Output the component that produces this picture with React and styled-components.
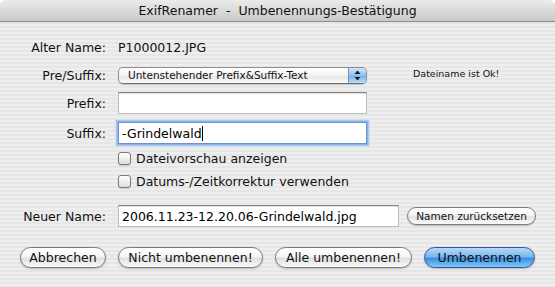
import React from 'react';
import styled, { createGlobalStyle, css } from 'styled-components';

const GlobalStyle = createGlobalStyle`
    html, body {
        margin: 0;
        padding: 0;
        background: #ffffff;
    }
    body {
        font-family: "DejaVu Sans", "Liberation Sans", sans-serif;
        font-size: 12.5px;
        color: #000;
    }
`;

const App = () => {
    return (
        <>
            <GlobalStyle />
            <Window>
                <TitleBar>ExifRenamer  -  Umbenennungs-Bestätigung</TitleBar>
                <Content>
                    <Row $top={17} $height={16}>
                        <Label>Alter Name:</Label>
                        <Value>P1000012.JPG</Value>
                    </Row>
                    <Row $top={11} $height={18}>
                        <Label>Pre/Suffix:</Label>
                        <Popup>
                            <PopupText>Untenstehender Prefix&amp;Suffix-Text</PopupText>
                            <PopupArrows>
                                <svg width="7" height="11" viewBox="0 0 7 11">
                                    <path d="M3.5 0.5 L6.5 4 L0.5 4 Z" fill="#1a1a1a" />
                                    <path d="M3.5 10.5 L6.5 7 L0.5 7 Z" fill="#1a1a1a" />
                                </svg>
                            </PopupArrows>
                        </Popup>
                        <Status>Dateiname ist Ok!</Status>
                    </Row>
                    <Row $top={8} $height={22}>
                        <Label>Prefix:</Label>
                        <TextField $width={249} />
                    </Row>
                    <Row $top={8} $height={22}>
                        <Label>Suffix:</Label>
                        <TextField $width={249} $focused>
                            -Grindelwald<Caret />
                        </TextField>
                    </Row>
                    <CheckRow $top={7}>
                        <CheckBox />
                        <span>Dateivorschau anzeigen</span>
                    </CheckRow>
                    <CheckRow $top={9}>
                        <CheckBox />
                        <span>Datums-/Zeitkorrektur verwenden</span>
                    </CheckRow>
                    <Row $top={17} $height={22}>
                        <Label>Neuer Name:</Label>
                        <TextField $width={281}>2006.11.23-12.20.06-Grindelwald.jpg</TextField>
                        <SmallButton>Namen zurücksetzen</SmallButton>
                    </Row>
                    <ButtonBar>
                        <PillButton $width={86}>Abbrechen</PillButton>
                        <PillButton $width={145}>Nicht umbenennen!</PillButton>
                        <PillButton $width={137}>Alle umbenennen!</PillButton>
                        <PillButton $width={111} $primary>Umbenennen</PillButton>
                    </ButtonBar>
                </Content>
            </Window>
        </>
    );
};

export default App;

const Window = styled.div`
    width: 555px;
    height: 287px;
    display: flex;
    flex-direction: column;
    overflow: hidden;
    border-radius: 6px 6px 0 0;
    background: repeating-linear-gradient(
        to bottom,
        #eeeeee 0px,
        #eeeeee 2px,
        #e6e6e6 2px,
        #e6e6e6 4px
    );
`;

const TitleBar = styled.div`
    height: 21px;
    flex-shrink: 0;
    display: flex;
    align-items: center;
    justify-content: center;
    white-space: pre;
    font-size: 12.5px;
    color: #111;
    background: linear-gradient(to bottom, #ebebeb 0%, #d9d9d9 55%, #c9c9c9 100%);
    border-bottom: 1px solid #8c8c8c;
`;

const Content = styled.div`
    display: flex;
    flex-direction: column;
`;

const Row = styled.div`
    display: flex;
    align-items: center;
    margin-top: ${props => props.$top}px;
    height: ${props => props.$height}px;
`;

const Label = styled.div`
    width: 106px;
    margin-right: 12px;
    text-align: right;
    flex-shrink: 0;
    color: #111;
`;

const Value = styled.div`
    color: #111;
`;

const Popup = styled.div`
    width: 249px;
    height: 17px;
    box-sizing: border-box;
    display: flex;
    align-items: center;
    border: 1px solid #8d8d8d;
    border-bottom-color: #6e6e6e;
    border-radius: 5px;
    overflow: hidden;
    background: linear-gradient(to bottom, #ffffff 0%, #f3f3f3 50%, #e4e4e4 51%, #fbfbfb 100%);
    box-shadow: 0 1px 1px rgba(0, 0, 0, 0.18);
`;

const PopupText = styled.div`
    flex: 1;
    padding-left: 9px;
    font-size: 10.5px;
    color: #111;
`;

const PopupArrows = styled.div`
    width: 17px;
    height: 100%;
    display: flex;
    align-items: center;
    justify-content: center;
    border-left: 1px solid #6f8fb8;
    background: linear-gradient(to bottom, #cfe6fb 0%, #8cc2f0 50%, #6aaeea 51%, #bfe2fc 100%);
`;

const Status = styled.div`
    margin-left: 46px;
    margin-top: -4px;
    font-size: 9.5px;
    color: #111;
`;

const TextField = styled.div`
    width: ${props => props.$width}px;
    height: 22px;
    box-sizing: border-box;
    display: flex;
    align-items: center;
    padding-left: 3px;
    background: #fff;
    border: 1px solid #bcbcbc;
    border-top-color: #7e7e7e;
    box-shadow: inset 0 1px 0 #e2e2e2;
    color: #000;
    white-space: pre;

    ${props => props.$focused && css`
        border-color: #6f93c6;
        box-shadow: 0 0 0 1px #8db6e6, 0 0 0 2px #a9caee, 0 0 0 3px #d0e2f5;
    `}
`;

const Caret = styled.span`
    display: inline-block;
    width: 1px;
    height: 15px;
    background: #000;
`;

const CheckRow = styled.div`
    display: flex;
    align-items: center;
    gap: 5px;
    height: 14px;
    margin-top: ${props => props.$top}px;
    padding-left: 118px;
    color: #111;
`;

const CheckBox = styled.div`
    width: 13px;
    height: 13px;
    box-sizing: border-box;
    border: 1px solid #7a7a7a;
    border-radius: 3px;
    background: linear-gradient(to bottom, #ffffff 0%, #f0f0f0 50%, #dcdcdc 100%);
    box-shadow: 0 1px 1px rgba(0, 0, 0, 0.15);
`;

const SmallButton = styled.div`
    margin-left: 8px;
    width: 129px;
    height: 18px;
    box-sizing: border-box;
    display: flex;
    align-items: center;
    justify-content: center;
    font-size: 10.5px;
    color: #111;
    border: 1px solid #7c7c7c;
    border-radius: 9px;
    background: linear-gradient(to bottom, #ffffff 0%, #f4f4f4 45%, #e2e2e2 55%, #fafafa 100%);
    box-shadow: 0 1px 1px rgba(0, 0, 0, 0.2);
`;

const ButtonBar = styled.div`
    display: flex;
    gap: 12px;
    margin-top: 20px;
    padding-left: 20px;
`;

const PillButton = styled.div`
    width: ${props => props.$width}px;
    height: 21px;
    box-sizing: border-box;
    display: flex;
    align-items: center;
    justify-content: center;
    color: #111;
    border: 1px solid #7a7a7a;
    border-radius: 11px;
    background: linear-gradient(to bottom, #ffffff 0%, #f5f5f5 45%, #e0e0e0 55%, #fbfbfb 100%);
    box-shadow: 0 1px 2px rgba(0, 0, 0, 0.22);

    ${props => props.$primary && css`
        border-color: #33569a;
        background: linear-gradient(to bottom, #b4daf9 0%, #7ab8ee 45%, #3d8fe2 55%, #7fcaf9 100%);
    `}
`;
